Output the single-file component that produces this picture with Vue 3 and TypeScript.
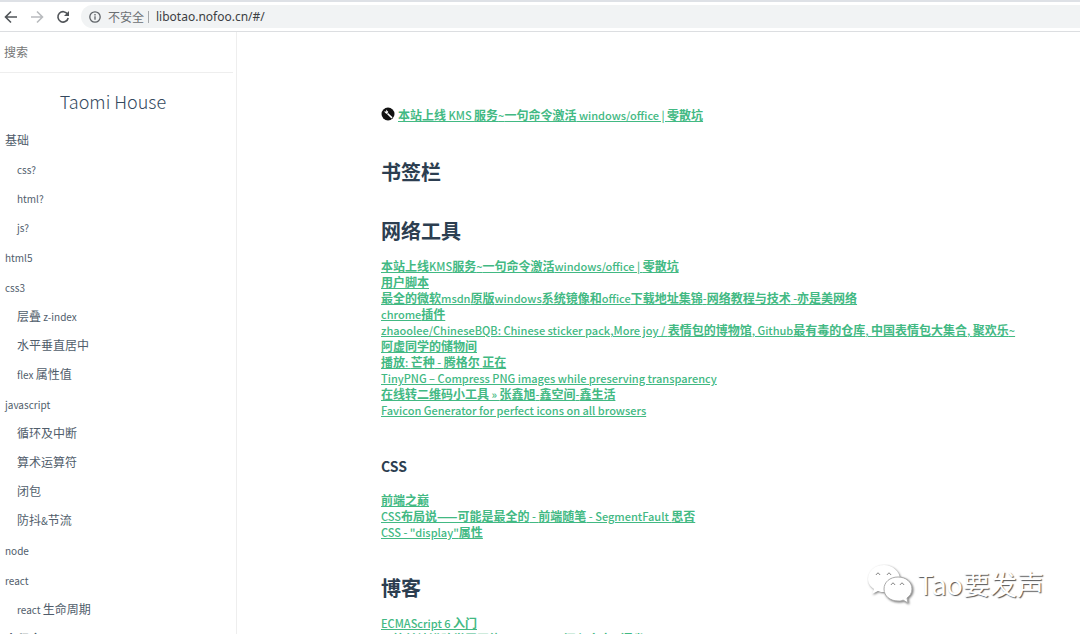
<script setup lang="ts">
import { h, type FunctionalComponent } from 'vue'

interface Entry { title: string; children: string[] }
interface Section { heading: string; level: number; links: string[] }

const menu: Entry[] = [
  { title: '基础', children: ['css?', 'html?', 'js?'] },
  { title: 'html5', children: [] },
  { title: 'css3', children: ['层叠 z-index', '水平垂直居中', 'flex 属性值'] },
  { title: 'javascript', children: ['循环及中断', '算术运算符', '闭包', '防抖&节流'] },
  { title: 'node', children: [] },
  { title: 'react', children: ['react 生命周期'] },
]

const sections: Section[] = [
  { heading: '书签栏', level: 2, links: [] },
  {
    heading: '网络工具',
    level: 2,
    links: [
      '本站上线KMS服务~一句命令激活windows/office | 零散坑',
      '用户脚本',
      '最全的微软msdn原版windows系统镜像和office下载地址集锦-网络教程与技术 -亦是美网络',
      'chrome插件',
      'zhaoolee/ChineseBQB: Chinese sticker pack,More joy / 表情包的博物馆, Github最有毒的仓库, 中国表情包大集合, 聚欢乐~',
      '阿虚同学的储物间',
      '播放: 芒种 - 腾格尔 正在',
      'TinyPNG – Compress PNG images while preserving transparency',
      '在线转二维码小工具 » 张鑫旭-鑫空间-鑫生活',
      'Favicon Generator for perfect icons on all browsers',
    ],
  },
  {
    heading: 'CSS',
    level: 3,
    links: ['前端之巅', 'CSS布局说——可能是最全的 - 前端随笔 - SegmentFault 思否', 'CSS - "display"属性'],
  },
  { heading: '博客', level: 2, links: ['ECMAScript 6 入门', '一篇前端进阶学习网络 - javascript 深入文章 - 语雀'] },
]

// Splits a label into Latin and CJK runs, so that each script has its own size.
const MixedText: FunctionalComponent<{ text: string }> = (props) =>
  (props.text.match(/[\u0020-\u2013]+|[^\u0020-\u2013]+/g) ?? []).map((run) =>
    h('span', { class: run.charCodeAt(0) <= 0x2013 ? 'latin' : 'han' }, run),
  )
MixedText.props = ['text']
</script>

<template>
  <div class="browser">
    <header class="toolbar">
      <button class="nav" aria-label="Back">
        <svg viewBox="0 0 16 16"><path d="M14 8H3M8 2.500L2.500 8L8 13.500" /></svg>
      </button>
      <button class="nav off" aria-label="Forward">
        <svg viewBox="0 0 16 16"><path d="M2 8h11M8 2.500L13.500 8L8 13.500" /></svg>
      </button>
      <button class="nav" aria-label="Reload">
        <svg viewBox="0 0 16 16"><path d="M12.600 5.200A5.200 5.200 0 1 0 13.200 9" /><path class="solid" d="M14 2v5H9z" /></svg>
      </button>
      <div class="address">
        <svg class="info" viewBox="0 0 12 12"><circle cx="6" cy="6" r="5.200" /><path d="M6 5.300v3.500M6 3v1.400" /></svg>
        <span class="insecure">不安全</span>
        <input class="url" aria-label="Address" value="libotao.nofoo.cn/#/" />
      </div>
    </header>
    <div class="page">
      <aside class="sidebar">
        <div class="search"><input type="search" aria-label="搜索" placeholder="搜索" /></div>
        <h1 class="brand"><a href="#/">Taomi House</a></h1>
        <nav>
          <ul class="menu">
            <li v-for="e in menu" :key="e.title">
              <a href="#/"><MixedText :text="e.title" /></a>
              <ul v-if="e.children.length" class="sub">
                <li v-for="c in e.children" :key="c"><a href="#/"><MixedText :text="c" /></a></li>
              </ul>
            </li>
            <li class="group">小程序</li>
          </ul>
        </nav>
      </aside>
      <main class="content">
        <p class="notice">
          <svg viewBox="0 0 14 14">
            <circle cx="7" cy="7" r="6.500" />
            <path class="handle" d="M6.500 6.500L11 10.800" />
            <path class="head" d="M3 4.600L5.400 7L7.400 5L5 2.600L5.400 4.600z" />
          </svg>
          <a href="#/"><MixedText text="本站上线 KMS 服务~一句命令激活 windows/office | 零散坑" /></a>
        </p>
        <section v-for="s in sections" :key="s.heading">
          <component :is="'h' + s.level">{{ s.heading }}</component>
          <ul v-if="s.links.length" class="links">
            <li v-for="l in s.links" :key="l"><a href="#/"><MixedText :text="l" /></a></li>
          </ul>
        </section>
      </main>
    </div>
    <div class="watermark">
      <svg viewBox="0 0 46 40">
        <path d="M17 1C8 1 1 7 1 15c0 5 3 8 6 10l-2 5 6-3c2 1 4 1 6 1 9 0 16-6 16-13S26 1 17 1z" />
        <path class="front" d="M31 13c-8 0-14 5-14 12s6 12 14 12c2 0 4 0 5-1l5 3-1-5c3-2 5-5 5-9 0-7-6-12-14-12z" />
        <path class="eye" d="M9 11q2-4 4 0M20 11q2-4 4 0M24 21q2-4 4 0M33 21q2-4 4 0" />
      </svg>
      <span>Tao要发声</span>
    </div>
  </div>
</template>

<style>
body { background: #fff; }
</style>

<style scoped>
* { box-sizing: border-box; }
ul { list-style: none; margin: 0; padding: 0; }
a { color: inherit; text-decoration: none; }
input { border: 0; padding: 0; background: none; outline: 0; font: inherit; color: inherit; }
.browser {
  position: relative;
  display: flex;
  flex-direction: column;
  height: 100vh;
  overflow: hidden;
  font-family: "Noto Sans CJK SC", sans-serif;
  font-size: 12px;
  color: #34495e;
}
.toolbar {
  flex: none;
  display: flex;
  align-items: center;
  gap: 10px;
  height: 32px;
  padding-left: 3px;
  border-top: 2px solid #dee1e6;
  border-bottom: 1px solid #dcdee1;
}
.nav { flex: none; width: 16px; height: 16px; padding: 0; border: 0; background: none; }
.nav svg { display: block; width: 16px; height: 16px; fill: none; stroke: #505458; stroke-width: 1.600; }
.nav .solid { fill: #505458; stroke: none; }
.nav.off svg { stroke: #b9bbbe; }
.address {
  flex: 1;
  display: flex;
  align-items: center;
  height: 23px;
  padding-left: 8px;
  border-radius: 12px 0 0 12px;
  background: #f1f3f4;
}
.info { width: 12px; height: 12px; fill: none; stroke: #5f6368; stroke-width: 1.300; }
.insecure { margin-left: 7px; padding-right: 4px; line-height: 12px; color: #6b6f73; border-right: 1px solid #a5a8ab; }
.url { flex: 1; margin-left: 7px; color: #3c4043; font-family: "Noto Sans", sans-serif; }
.page { flex: 1; display: flex; min-height: 0; }
.sidebar { flex: none; width: 237px; border-right: 1px solid #eeeeee; }
.search { height: 41px; margin-right: 3px; padding: 10px 4px 0; border-bottom: 1px solid #eeeeee; }
.search input { display: block; width: 100%; height: 18px; color: #666; appearance: none; }
.search input::placeholder { color: #757575; opacity: 1; }
.brand { margin: 13px 10px 9px 0; font-size: 18px; line-height: 30px; font-weight: 300; text-align: center; color: #34495e; }
.menu { padding-left: 5px; line-height: 29px; color: #505d6b; }
.menu > li { margin-bottom: 1px; }
.menu a { display: block; height: 29px; }
.menu :deep(.latin) { font-size: 10px; }
.sub { padding-left: 12px; }
.group { font-weight: 700; }
.content { flex: 1; min-width: 0; padding: 75px 16px 0 144px; white-space: nowrap; }
.notice { display: flex; gap: 3px; margin: 0 0 5px; line-height: 16px; color: #42b983; }
.notice svg { width: 14px; height: 14px; }
.notice circle { fill: #111; }
.notice path { fill: none; stroke: #fff; }
.notice .handle { stroke-width: 1.600; }
.notice .head { fill: #fff; stroke: none; }
.notice a, .links a { text-decoration: underline; }
.notice :deep(.latin), .links :deep(.latin) { font-size: 11px; font-weight: 500; }
.notice :deep(.han), .links :deep(.han) { font-weight: 700; }
h2 { margin: 0; padding: 29px 0 0; font-size: 20px; line-height: 30px; font-weight: 700; color: #2c3e50; }
h3 { margin: 0; padding: 30px 0 0; font-size: 14px; line-height: 28px; font-weight: 700; color: #2c3e50; }
.links { padding: 12px 0 4px; line-height: 16px; color: #42b983; }
.links li { height: 16px; }
.watermark { position: absolute; right: 36px; bottom: 30px; display: flex; align-items: center; gap: 4px; font-size: 27px; line-height: 36px; color: #fff; text-shadow: 1px 1px 1px #555; }
.watermark svg { width: 46px; height: 40px; margin-left: -2px; fill: #fff; filter: drop-shadow(1px 1px 1px #777777); }
.watermark .front { stroke: #aaa; stroke-width: 1; }
.watermark .eye { fill: none; stroke: #888; }
</style>
